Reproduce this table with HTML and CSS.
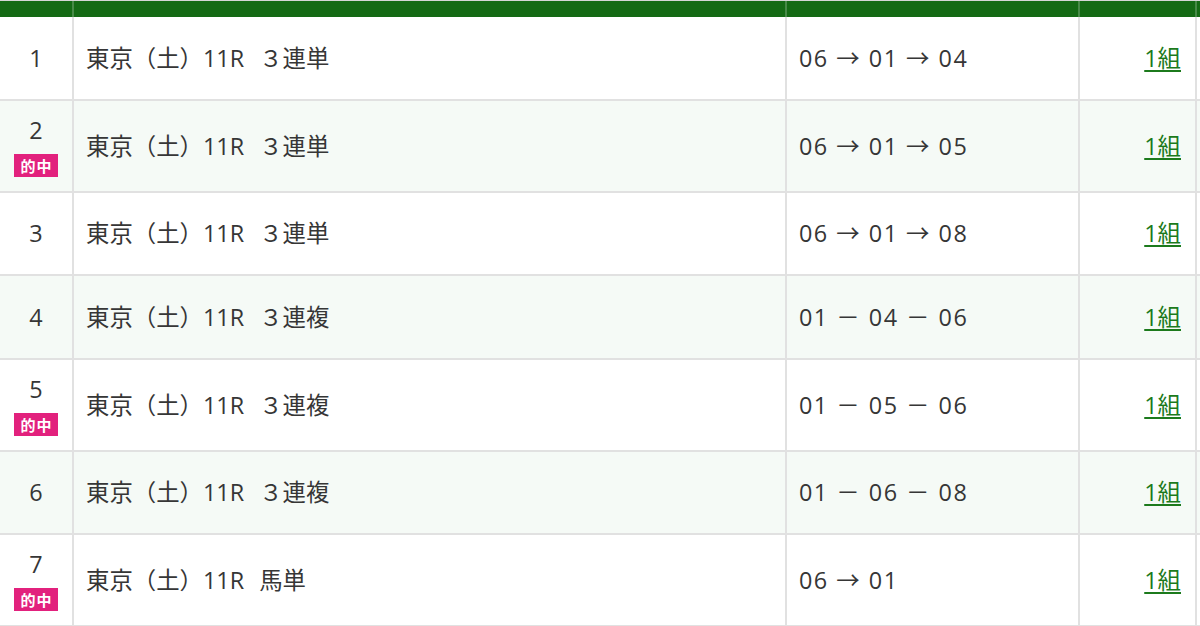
FILE: index.html
```html
<!DOCTYPE html>
<html lang="ja">
<head>
<meta charset="utf-8">
<title>購入履歴</title>
<link rel="stylesheet" href="styles.css">
</head>
<body>
<table class="bets">
  <colgroup>
    <col class="c-no">
    <col class="c-race">
    <col class="c-combo">
    <col class="c-count">
    <col class="c-extra">
  </colgroup>
  <thead>
    <tr><th></th><th></th><th></th><th></th><th></th></tr>
  </thead>
  <tbody>
    <tr>
      <td class="no"><div class="no-box"><span class="num">1</span></div></td>
      <td class="race">東京（土）11R ３連単</td>
      <td class="combo">06 → 01 → 04</td>
      <td class="count"><a href="#">1組</a></td>
      <td class="extra"></td>
    </tr>
    <tr class="alt">
      <td class="no"><div class="no-box"><span class="num">2</span><span class="hit">的中</span></div></td>
      <td class="race">東京（土）11R ３連単</td>
      <td class="combo">06 → 01 → 05</td>
      <td class="count"><a href="#">1組</a></td>
      <td class="extra"></td>
    </tr>
    <tr>
      <td class="no"><div class="no-box"><span class="num">3</span></div></td>
      <td class="race">東京（土）11R ３連単</td>
      <td class="combo">06 → 01 → 08</td>
      <td class="count"><a href="#">1組</a></td>
      <td class="extra"></td>
    </tr>
    <tr class="alt">
      <td class="no"><div class="no-box"><span class="num">4</span></div></td>
      <td class="race">東京（土）11R ３連複</td>
      <td class="combo">01 － 04 － 06</td>
      <td class="count"><a href="#">1組</a></td>
      <td class="extra"></td>
    </tr>
    <tr>
      <td class="no"><div class="no-box"><span class="num">5</span><span class="hit">的中</span></div></td>
      <td class="race">東京（土）11R ３連複</td>
      <td class="combo">01 － 05 － 06</td>
      <td class="count"><a href="#">1組</a></td>
      <td class="extra"></td>
    </tr>
    <tr class="alt">
      <td class="no"><div class="no-box"><span class="num">6</span></div></td>
      <td class="race">東京（土）11R ３連複</td>
      <td class="combo">01 － 06 － 08</td>
      <td class="count"><a href="#">1組</a></td>
      <td class="extra"></td>
    </tr>
    <tr>
      <td class="no"><div class="no-box"><span class="num">7</span><span class="hit">的中</span></div></td>
      <td class="race">東京（土）11R 馬単</td>
      <td class="combo">06 → 01</td>
      <td class="count"><a href="#">1組</a></td>
      <td class="extra"></td>
    </tr>
  </tbody>
</table>
</body>
</html>
```

FILE: styles.css
```css
* { box-sizing: border-box; }

html, body {
  margin: 0;
  padding: 0;
  background: #ffffff;
}

body {
  font-family: "Open Sans", "Noto Sans CJK JP", sans-serif;
  color: #363636;
  overflow: hidden;
}

.bets {
  border-collapse: separate;
  border-spacing: 0;
  table-layout: fixed;
  width: 1300px;
  border-top: 1px solid #d6d6d6;
}

.c-no { width: 74px; }
.c-race { width: 713px; }
.c-combo { width: 293px; }
.c-count { width: 117px; }
.c-extra { width: 103px; }

.bets th {
  height: 16px;
  padding: 0;
  background: #146a14;
  border-right: 2px solid rgba(255, 255, 255, 0.22);
}

.bets td {
  padding: 14px 12px;
  border-right: 2px solid #e1e1e1;
  border-bottom: 2px solid #e1e1e1;
  font-size: 23.4px;
  line-height: 28px;
  vertical-align: middle;
  background: #ffffff;
  white-space: nowrap;
}

.bets tr.alt td {
  background: #f5faf6;
}

.bets td.no {
  padding: 14px 0;
  text-align: center;
}

.no-box {
  min-height: 53.5px;
  display: flex;
  flex-direction: column;
  align-items: center;
  justify-content: center;
  gap: 9px;
}

.num {
  display: block;
  line-height: 30px;
}

.hit {
  display: block;
  width: 44px;
  height: 23px;
  background: #e2217d;
  color: #ffffff;
  font-family: "Noto Sans CJK JP", sans-serif;
  font-size: 15px;
  font-weight: 700;
  line-height: 23px;
  letter-spacing: 1px;
  text-indent: 1px;
  text-align: center;
}

.bets td.race {
  word-spacing: 9px;
}

.bets td.combo {
  letter-spacing: 1.5px;
}

.bets td.count {
  text-align: right;
  padding-right: 14px;
}

.count a {
  color: #1c7a1c;
  text-decoration: underline;
  text-underline-offset: 3px;
  text-decoration-thickness: 2px;
}
```
